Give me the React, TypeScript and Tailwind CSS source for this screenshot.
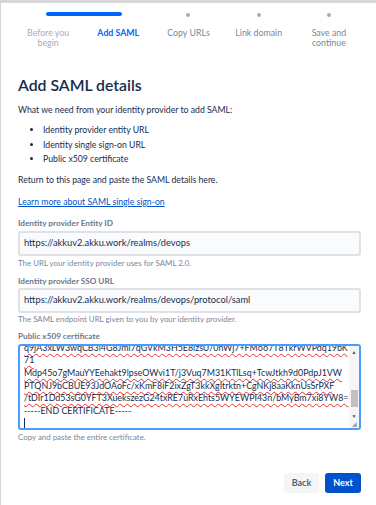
import React from "react";

const steps = [
  { label: ["Before you", "begin"], state: "done" },
  { label: ["Add SAML"], state: "active" },
  { label: ["Copy URLs"], state: "todo" },
  { label: ["Link domain"], state: "todo" },
  { label: ["Save and", "continue"], state: "todo" },
];

const certLines = [
  "q9jA3xLW3wqCB3l4G8Jml7qGVkM3H5E8lzsU/0nWj7+FM667T8TkrWVPdq19bK",
  "71",
  "Mdp45o7gMauYYEehakt9lpseOWvi1T/j3Vuq7M31KTlLsq+TcwJtkh9d0PdpJ1VW",
  "PTQNJ9bCBUE93JdOAoFc/xKmF8iF2ixZgT3kkXgItrktn+CgNKj8aaKknUsSrPXF",
  "/tDIr1Dd53sG0YFT3XuekszezG24txRE7uRxEhts5WYEWPI43n/bMyBm7xi8YW8=",
];

export default function App() {
  return (
    <div
      className="h-[505px] w-[376px] overflow-hidden border-t-[3px] border-l border-[#d6d6d6] bg-white text-[#172b4d]"
      style={{ fontFamily: "Lato, 'Noto Sans', sans-serif" }}
    >
      {/* Progress tracker */}
      <div className="px-[12px] pt-[9px]">
        <div className="relative grid h-[5px] grid-cols-5 items-center">
          <div className="absolute left-[33px] top-0 h-[4px] w-[76px] rounded-full bg-[#0065ff]" />
          {steps.map((s, i) => (
            <div key={i} className="flex justify-center">
              {s.state === "todo" && <span className="h-[4px] w-[4px] rounded-full bg-[#a5adba]" />}
            </div>
          ))}
        </div>
        <div className="mt-[11px] grid grid-cols-5">
          {steps.map((s, i) => (
            <div
              key={i}
              className={`text-center text-[8.8px] leading-[10px] ${
                s.state === "active"
                  ? "font-bold text-[#0065ff]"
                  : s.state === "done"
                  ? "text-[#a5adba]"
                  : "text-[#7a869a]"
              }`}
            >
              {s.label.map((l) => (
                <div key={l}>{l}</div>
              ))}
            </div>
          ))}
        </div>
      </div>

      <div className="px-[17px] pr-[15px]">
        <h1 className="mt-[26px] text-[15.8px] font-semibold leading-[22px] text-[#172b4d]">Add SAML details</h1>
        <p className="mt-[7px] text-[8.7px] leading-[14px] text-[#172b4d]">
          What we need from your identity provider to add SAML:
        </p>
        <ul className="mt-[6px] list-disc pl-[25px] text-[8.7px] leading-[14.5px]">
          <li>Identity provider entity URL</li>
          <li>Identity single sign-on URL</li>
          <li>Public x509 certificate</li>
        </ul>
        <p className="mt-[6px] text-[8.7px] leading-[14px]">Return to this page and paste the SAML details here.</p>
        <a href="#" className="mt-[8px] block text-[8.7px] leading-[14px] text-[#0052cc] underline">
          Learn more about SAML single sign-on
        </a>

        <label className="mt-[9px] block text-[8.2px] font-bold leading-[10px] text-[#6b778c]">
          Identity provider Entity ID
        </label>
        <div className="mt-[3px] flex h-[25px] items-center rounded-[3px] border-2 border-[#dfe1e6] bg-[#fafbfc] px-[4px] text-[9.3px] text-[#172b4d]">
          https://akkuv2.akku.work/realms/devops
        </div>
        <p className="mt-[2px] text-[7.9px] leading-[10px] text-[#7a869a]">The URL your identity provider uses for SAML 2.0.</p>

        <label className="mt-[8px] block text-[8.2px] font-bold leading-[10px] text-[#6b778c]">
          Identity provider SSO URL
        </label>
        <div className="mt-[2px] flex h-[25px] items-center rounded-[3px] border-2 border-[#dfe1e6] bg-[#fafbfc] px-[4px] text-[9.3px] text-[#172b4d]">
          https://akkuv2.akku.work/realms/devops/protocol/saml
        </div>
        <p className="mt-[1px] text-[7.9px] leading-[10px] text-[#7a869a]">
          The SAML endpoint URL given to you by your identity provider.
        </p>

        <label className="mt-[7px] block text-[8.2px] font-bold leading-[10px] text-[#6b778c]">
          Public x509 certificate
        </label>
        <div className="mt-[3px] flex h-[86px] overflow-hidden rounded-[3px] border-2 border-[#4c9aff] bg-white">
          <div className="-mt-[4px] flex-1 overflow-hidden pl-[4px] text-[8.9px] leading-[12.7px] text-[#172b4d]">
            {certLines.map((l, i) => (
              <div key={i} className="whitespace-nowrap">
                <span className="underline decoration-wavy decoration-[#e5322d] decoration-1 underline-offset-2">{l}</span>
              </div>
            ))}
            <div className="whitespace-nowrap">-----END CERTIFICATE-----</div>
            <div className="h-[11px] w-px bg-[#172b4d]" />
          </div>
          <div className="flex w-[10px] flex-col items-center bg-[#f5f5f5]">
            <span className="mt-[3px] text-[5px] leading-[6px] text-[#505050]">▲</span>
            <div className="mt-auto h-[17px] w-[7px] bg-[#c1c1c1]" />
            <span className="mt-[6px] text-[5px] leading-[6px] text-[#505050]">▼</span>
            <span className="mb-[1px] mt-[2px] text-[6px] leading-[6px] text-[#9a9a9a]">◢</span>
          </div>
        </div>
        <p className="mt-[2px] text-[7.9px] leading-[10px] text-[#7a869a]">Copy and paste the entire certificate.</p>

        <div className="mt-[31px] flex justify-end gap-[6px]">
          <button className="h-[20px] w-[35px] rounded-[3px] bg-[#f4f5f7] text-[9px] font-bold text-[#505f79]">Back</button>
          <button className="h-[20px] w-[36px] rounded-[3px] bg-[#0052cc] text-[9px] font-bold text-white">Next</button>
        </div>
      </div>
    </div>
  );
}
